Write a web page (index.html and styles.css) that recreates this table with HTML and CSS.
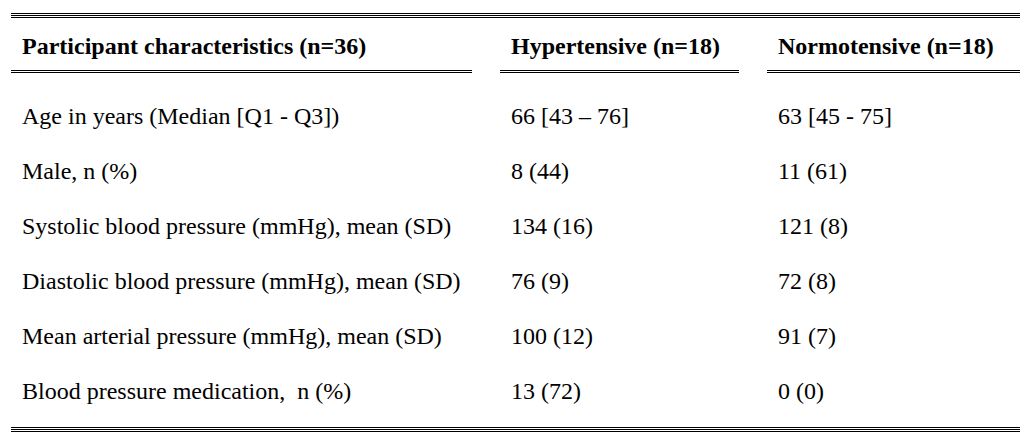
FILE: index.html
```html
<!DOCTYPE html>
<html>
<head>
<meta charset="utf-8">
<link rel="stylesheet" href="styles.css">
</head>
<body>
<div class="table">
  <div class="rule-triple"></div>
  <div class="grid head">
    <div class="hcell">Participant characteristics (n=36)</div>
    <div class="hcell">Hypertensive (n=18)</div>
    <div class="hcell">Normotensive (n=18)</div>
  </div>
  <div class="grid body">
    <div class="cell">Age in years (Median [Q1 - Q3])</div>
    <div class="cell">66 [43 – 76]</div>
    <div class="cell">63 [45 - 75]</div>

    <div class="cell">Male, n (%)</div>
    <div class="cell">8 (44)</div>
    <div class="cell">11 (61)</div>

    <div class="cell">Systolic blood pressure (mmHg), mean (SD)</div>
    <div class="cell">134 (16)</div>
    <div class="cell">121 (8)</div>

    <div class="cell">Diastolic blood pressure (mmHg), mean (SD)</div>
    <div class="cell">76 (9)</div>
    <div class="cell">72 (8)</div>

    <div class="cell">Mean arterial pressure (mmHg), mean (SD)</div>
    <div class="cell">100 (12)</div>
    <div class="cell">91 (7)</div>

    <div class="cell">Blood pressure medication,&nbsp; n (%)</div>
    <div class="cell">13 (72)</div>
    <div class="cell">0 (0)</div>
  </div>
  <div class="rule-triple"></div>
</div>
</body>
</html>
```
FILE: styles.css
```css
html, body {
  margin: 0;
  padding: 0;
  background: #fff;
}
body {
  font-family: "Liberation Serif", "Times New Roman", serif;
  color: #000;
}
.table {
  width: 1009px;
  margin-left: 11px;
  padding-top: 13px;
}
.rule-triple {
  height: 5px;
  background: linear-gradient(#000 0 1px, #fff 1px 2px, #000 2px 3px, #fff 3px 4px, #000 4px 5px);
}
.grid {
  display: grid;
  grid-template-columns: 461px 239px 253px;
  column-gap: 28px;
}
.hcell {
  font-weight: bold;
  font-size: 24px;
  line-height: 23px;
  padding: 17px 11px 12px;
  border-bottom: 3px double #000;
  white-space: nowrap;
}
.body {
  padding-top: 16px;
  padding-bottom: 8px;
}
.cell {
  font-size: 24px;
  line-height: 23px;
  padding: 16px 11px 16px;
  white-space: nowrap;
}
```
